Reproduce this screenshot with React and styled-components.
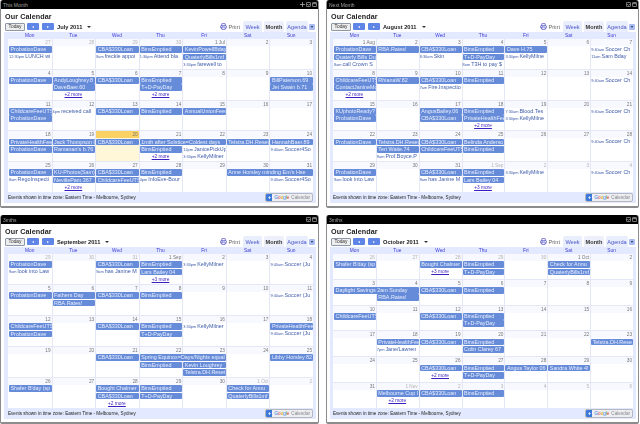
import React from "react";
import styled, { createGlobalStyle } from "styled-components";
import { Printer } from "lucide-react";

const GlobalStyle = createGlobalStyle`
  html, body {
    margin: 0;
    padding: 0;
    background: #fff;
    font-family: "Liberation Sans", Arial, sans-serif;
  }
`;

const bar = (col, row, text, span = 1) => ({ kind: "bar", col, row, text, span });
const timed = (col, row, time, text) => ({ kind: "timed", col, row, time, text, span: 1 });
const more = (col, row, n) => ({ kind: "more", col, row, text: `+${n} more`, span: 1 });

const sep1 = (soccer, kelly) => [
  bar(0, 0, "ProbationDave"),
  timed(0, 1, "9am", "look into Law"),
  bar(2, 0, "CBA$330Loan"),
  timed(2, 1, "9am", "has Janine M"),
  bar(3, 0, "BinsEmptied"),
  bar(3, 1, "Lars Bailey 04"),
  more(3, 2, 3),
  timed(4, 0, "3:30pm", kelly),
  timed(6, 0, "9:40am", soccer),
];

const calendars = [
  {
    label: "This Month",
    month: "July 2011",
    controls: 3,
    inset: 4,
    weeks: [
      {
        days: [["27", 1], ["28", 1], ["29", 1], ["30", 1], ["1 Jul"], ["2"], ["3"]],
        events: [
          bar(0, 0, "ProbationDave"),
          timed(0, 1, "12:30pm", "LUNCH wi"),
          bar(2, 0, "CBA$330Loan"),
          timed(2, 1, "8am", "freckle appoi"),
          bar(3, 0, "BinsEmptied"),
          timed(3, 1, "1:30pm", "Attend bla"),
          bar(4, 0, "KevinPowellBday"),
          bar(4, 1, "QuaterlyBills1mf"),
          timed(4, 2, "3:30pm", "farewell to"),
        ],
      },
      {
        days: [["4"], ["5"], ["6"], ["7"], ["8"], ["9"], ["10"]],
        events: [
          bar(0, 0, "ProbationDave"),
          bar(1, 0, "AndyLoughrey.8"),
          bar(1, 1, "DaveBaer.60"),
          more(1, 2, 2),
          bar(2, 0, "CBA$330Loan"),
          bar(3, 0, "BinsEmptied"),
          bar(3, 1, "T+D-PayDay"),
          more(3, 2, 2),
          bar(6, 0, "BillPaterson.69"),
          bar(6, 1, "Jet Swain b.71"),
        ],
      },
      {
        days: [["11"], ["12"], ["13"], ["14"], ["15"], ["16"], ["17"]],
        events: [
          bar(0, 0, "ChildcareFeeUTS"),
          bar(0, 1, "ProbationDave"),
          timed(1, 0, "4pm", "received call"),
          bar(2, 0, "CBA$330Loan"),
          bar(3, 0, "BinsEmptied"),
          bar(4, 0, "AnnualUnionFees"),
        ],
      },
      {
        today: 2,
        days: [["18"], ["19"], ["20"], ["21"], ["22"], ["23"], ["24"]],
        events: [
          bar(0, 0, "PrivateHealthFee"),
          bar(0, 1, "ProbationDave"),
          bar(1, 0, "Jack Thompson b"),
          bar(1, 1, "Ramanan's b.76"),
          bar(2, 0, "CBA$330Loan"),
          bar(3, 0, "1mth after Solstice=Coldest days", 2),
          bar(3, 1, "BinsEmptied"),
          more(3, 2, 2),
          timed(4, 1, "12pm", "JanicePickUp"),
          timed(4, 2, "3:30pm", "KellyMilner"),
          bar(5, 0, "Telstra.DH.Reset"),
          bar(6, 0, "HannahBaer.89"),
          timed(6, 1, "9:40am", "Soccer4So"),
        ],
      },
      {
        days: [["25"], ["26"], ["27"], ["28"], ["29"], ["30"], ["31"]],
        events: [
          bar(0, 0, "ProbationDave"),
          timed(0, 1, "8am", "RegoInspecti"),
          bar(1, 0, "KU-Photos(Sam)"),
          bar(1, 1, "NevillePam.367"),
          more(1, 2, 2),
          bar(2, 0, "CBA$330Loan"),
          bar(2, 1, "ChildcareFeeUTS"),
          bar(3, 0, "BinsEmptied"),
          timed(3, 1, "4pm", "InfoEve-Bour"),
          bar(5, 0, "Anne Horsley minding Em's Hse", 2),
          timed(6, 1, "9:40am", "Soccer4So"),
        ],
      },
    ],
  },
  {
    label: "Next Month",
    month: "August 2011",
    controls: 2,
    inset: 3,
    weeks: [
      {
        days: [["1 Aug"], ["2"], ["3"], ["4"], ["5"], ["6"], ["7"]],
        events: [
          bar(0, 0, "ProbationDave"),
          bar(0, 1, "Quaterly Bills Du"),
          timed(0, 2, "8am", "call Crown S"),
          bar(1, 0, "RBA.Rates!"),
          bar(2, 0, "CBA$330Loan"),
          timed(2, 1, "8:30am", "Skin"),
          bar(3, 0, "BinsEmptied"),
          bar(3, 1, "T+D-PayDay"),
          timed(3, 2, "8am", "T3H to pay $"),
          bar(4, 0, "Dave H.75"),
          timed(4, 1, "3:30pm", "KellyMilne"),
          timed(6, 0, "9:40am", "Soccer Ch"),
          timed(6, 1, "11am", "Sam Bday"),
        ],
      },
      {
        days: [["8"], ["9"], ["10"], ["11"], ["12"], ["13"], ["14"]],
        events: [
          bar(0, 0, "ChildcareFeeUTS"),
          bar(0, 1, "ContactJanineMc"),
          more(0, 2, 2),
          bar(1, 0, "RhianaW.82"),
          bar(2, 0, "CBA$330Loan"),
          timed(2, 1, "7am", "Fire.Inspectio"),
          bar(3, 0, "BinsEmptied"),
          timed(6, 0, "9:40am", "Soccer Ch"),
        ],
      },
      {
        days: [["15"], ["16"], ["17"], ["18"], ["19"], ["20"], ["21"]],
        events: [
          bar(0, 0, "KUphotoReady?"),
          bar(0, 1, "ProbationDave"),
          bar(2, 0, "AngusBailey.06"),
          bar(2, 1, "CBA$330Loan"),
          bar(3, 0, "BinsEmptied"),
          bar(3, 1, "PrivateHealthFee"),
          more(3, 2, 2),
          timed(4, 0, "7:30am", "Blood.Tes"),
          timed(4, 1, "3:30pm", "KellyMilne"),
          timed(6, 0, "9:40am", "Soccer Ch"),
        ],
      },
      {
        days: [["22"], ["23"], ["24"], ["25"], ["26"], ["27"], ["28"]],
        events: [
          bar(0, 0, "ProbationDave"),
          bar(1, 0, "Telstra.DH.Reset"),
          bar(1, 1, "Teri Waite.74"),
          timed(1, 2, "9am", "Prof.Boyce.P"),
          bar(2, 0, "CBA$330Loan"),
          bar(2, 1, "ChildcareFeeUTS"),
          bar(3, 0, "Belinda Anderso"),
          bar(3, 1, "BinsEmptied"),
          timed(6, 0, "9:40am", "Soccer Ch"),
        ],
      },
      {
        days: [["29"], ["30"], ["31"], ["1 Sep", 1], ["2", 1], ["3", 1], ["4", 1]],
        events: sep1("Soccer Ch", "KellyMilne"),
      },
    ],
  },
  {
    label: "3mths",
    month: "September 2011",
    controls: 2,
    inset: 4,
    weeks: [
      {
        days: [["29", 1], ["30", 1], ["31", 1], ["1 Sep"], ["2"], ["3"], ["4"]],
        events: sep1("Soccer (Ju", "KellyMilner"),
      },
      {
        days: [["5"], ["6"], ["7"], ["8"], ["9"], ["10"], ["11"]],
        events: [
          bar(0, 0, "ProbationDave"),
          bar(1, 0, "Fathers Day"),
          bar(1, 1, "RBA.Rates!"),
          bar(2, 0, "CBA$330Loan"),
          bar(3, 0, "BinsEmptied"),
          timed(6, 0, "9:40am", "Soccer (Ju"),
        ],
      },
      {
        days: [["12"], ["13"], ["14"], ["15"], ["16"], ["17"], ["18"]],
        events: [
          bar(0, 0, "ChildcareFeeUTS"),
          bar(0, 1, "ProbationDave"),
          bar(2, 0, "CBA$330Loan"),
          bar(3, 0, "BinsEmptied"),
          bar(3, 1, "T+D-PayDay"),
          timed(4, 0, "3:30pm", "KellyMilner"),
          bar(6, 0, "PrivateHealthFee"),
          timed(6, 1, "9:40am", "Soccer (Ju"),
        ],
      },
      {
        days: [["19"], ["20"], ["21"], ["22"], ["23"], ["24"], ["25"]],
        events: [
          bar(2, 0, "CBA$330Loan"),
          bar(3, 0, "Spring Equinox=Days/Nights equal", 2),
          bar(3, 1, "BinsEmptied"),
          bar(4, 1, "Kevin Loughrey"),
          bar(4, 2, "Telstra.DH.Reset"),
          bar(6, 0, "Libby Horsley 82"),
        ],
      },
      {
        days: [["26"], ["27"], ["28"], ["29"], ["30"], ["1 Oct", 1], ["2", 1]],
        events: [
          bar(0, 0, "Shafer B'day (sp"),
          bar(2, 0, "Bought Chalmer"),
          bar(2, 1, "CBA$330Loan"),
          more(2, 2, 2),
          bar(3, 0, "BinsEmptied"),
          bar(3, 1, "T+D-PayDay"),
          bar(5, 0, "Check for Annu"),
          bar(5, 1, "QuaterlyBills1mf"),
        ],
      },
    ],
  },
  {
    label: "3mths",
    month: "October 2011",
    controls: 2,
    inset: 3,
    weeks: [
      {
        days: [["26", 1], ["27", 1], ["28", 1], ["29", 1], ["30", 1], ["1 Oct"], ["2"]],
        events: [
          bar(0, 0, "Shafer B'day (sp"),
          bar(2, 0, "Bought Chalmer"),
          more(2, 1, 3),
          bar(3, 0, "BinsEmptied"),
          bar(3, 1, "T+D-PayDay"),
          bar(5, 0, "Check for Annu"),
          bar(5, 1, "QuaterlyBills1mf"),
        ],
      },
      {
        days: [["3"], ["4"], ["5"], ["6"], ["7"], ["8"], ["9"]],
        events: [
          bar(0, 0, "Daylight Savings 2am Sunday", 2),
          bar(1, 1, "RBA.Rates!"),
          bar(2, 0, "CBA$330Loan"),
          bar(3, 0, "BinsEmptied"),
        ],
      },
      {
        days: [["10"], ["11"], ["12"], ["13"], ["14"], ["15"], ["16"]],
        events: [
          bar(0, 0, "ChildcareFeeUTS"),
          bar(2, 0, "CBA$330Loan"),
          bar(3, 0, "BinsEmptied"),
          bar(3, 1, "T+D-PayDay"),
        ],
      },
      {
        days: [["17"], ["18"], ["19"], ["20"], ["21"], ["22"], ["23"]],
        events: [
          bar(1, 0, "PrivateHealthFee"),
          timed(1, 1, "7pm", "Jane/Lawren"),
          bar(2, 0, "CBA$330Loan"),
          bar(3, 0, "BinsEmptied"),
          bar(3, 1, "Colin Clarey 67"),
          bar(6, 0, "Telstra.DH.Rese"),
        ],
      },
      {
        days: [["24"], ["25"], ["26"], ["27"], ["28"], ["29"], ["30"]],
        events: [
          bar(2, 0, "CBA$330Loan"),
          more(2, 1, 2),
          bar(3, 0, "BinsEmptied"),
          bar(3, 1, "T+D-PayDay"),
          bar(4, 0, "Angus Taylor 06"),
          bar(5, 0, "Sandra White 4!"),
        ],
      },
      {
        days: [["31"], ["1 Nov", 1], ["2", 1], ["3", 1], ["4", 1], ["5", 1], ["6", 1]],
        events: [
          bar(1, 0, "Melbourne Cup I"),
          more(1, 1, 2),
          bar(2, 0, "CBA$330Loan"),
          bar(3, 0, "BinsEmptied"),
        ],
      },
    ],
  },
];

const dayNames = ["Mon", "Tue", "Wed", "Thu", "Fri", "Sat", "Sun"];

const Page = styled.div`
  width: 640px;
  height: 424px;
  overflow: hidden;
  display: grid;
  grid-template-columns: 319px 313px;
  grid-template-rows: 208px 209px;
  column-gap: 7px;
  row-gap: 7px;
  filter: blur(0.3px);
`;

const Gadget = styled.section`
  display: flex;
  flex-direction: column;
  min-width: 0;
  min-height: 0;
  border: solid #8c8c8c;
  border-width: 0 1px 2px 1px;
  border-radius: 3px 3px 2px 2px;
  background: #fff;
`;

const TitleBar = styled.header`
  flex: none;
  height: 9px;
  background: #000;
  border-radius: 2px 2px 0 0;
  display: flex;
  align-items: center;
  justify-content: space-between;
  padding: 0 1px 0 2px;
  color: #a0a0a0;
  font-size: 5px;
`;

const GadgetIcons = styled.div`
  display: flex;
  gap: 1px;
  color: #a8a8a8;
`;

const Body = styled.div`
  flex: 1;
  min-height: 0;
  display: flex;
  flex-direction: column;
  padding: 3px 2px 3px 3px;
`;

const CalendarTitle = styled.h2`
  margin: 0;
  font-size: 7.2px;
  line-height: 9px;
  font-weight: bold;
  letter-spacing: 0.1px;
  color: #222;
  padding-left: 1px;
`;

const Toolbar = styled.div`
  display: flex;
  align-items: center;
  height: 11px;
  padding-left: 1px;
`;

const TodayButton = styled.button`
  width: 20px;
  height: 8px;
  padding: 0;
  font: 4.8px "Liberation Sans", Arial, sans-serif;
  color: #333;
  background: #eee;
  border: 1px solid #8d98a8;
  border-radius: 1px;
`;

const NavButton = styled.button`
  width: 12px;
  height: 7px;
  margin-left: ${(p) => (p.$gap ? 3 : 2)}px;
  padding: 0;
  border: none;
  border-radius: 1px;
  background: #5f86e6;
  display: flex;
  align-items: center;
  justify-content: center;
`;

const Arrow = styled.span`
  width: 0;
  height: 0;
  border-style: solid;
  border-width: 1.5px 0 1.5px 2px;
  border-color: transparent transparent transparent #fff;
  transform: ${(p) => (p.$left ? "rotate(180deg)" : "none")};
`;

const MonthName = styled.span`
  margin-left: 3px;
  font-size: 5.7px;
  font-weight: bold;
  white-space: nowrap;
  color: #222;
`;

const DownCaret = styled.span`
  width: 0;
  height: 0;
  margin-left: 5px;
  border-style: solid;
  border-width: 2px 2px 0 2px;
  border-color: #333 transparent transparent transparent;
`;

const ViewSwitch = styled.div`
  margin-left: auto;
  display: flex;
  align-items: center;
  height: 11px;
  gap: 2px;
`;

const PrintLink = styled.span`
  display: flex;
  align-items: center;
  gap: 1px;
  margin-right: 1px;
  font-size: 5.6px;
  color: #666;
  svg {
    color: #5555c8;
  }
`;

const ViewTab = styled.span`
  height: 11px;
  line-height: 12px;
  width: ${(p) => p.$width}px;
  text-align: center;
  background: ${(p) => (p.$active ? "#edf0fb" : "#e9eefd")};
  color: ${(p) => (p.$active ? "#333" : "#4a55c8")};
  font-size: 5.6px;
  font-weight: ${(p) => (p.$active ? "bold" : "normal")};
  border-radius: 2px 2px 0 0;
`;

const ViewMenu = styled.span`
  width: 6px;
  height: 6px;
  background: #a9bdf1;
  border-radius: 1px;
  margin: 0 1px 0 -1px;
  display: flex;
  align-items: center;
  justify-content: center;
  &::after {
    content: "";
    border-style: solid;
    border-width: 2px 1.5px 0 1.5px;
    border-color: #224 transparent transparent transparent;
  }
`;

const Frame = styled.div`
  flex: 1;
  min-height: 0;
  display: flex;
  flex-direction: column;
  background: #e3e9ff;
  padding: 0 3px 0 ${(p) => p.$inset}px;
`;

const DayHeader = styled.div`
  flex: none;
  height: 7px;
  display: grid;
  grid-template-columns: repeat(7, 1fr);
`;

const DayName = styled.span`
  text-align: center;
  font-size: 4.8px;
  line-height: 7px;
  color: #3a3ad0;
`;

const Weeks = styled.div`
  flex: 1;
  min-height: 0;
  display: flex;
  flex-direction: column;
  background: #fff;
`;

const Week = styled.div`
  flex: 1;
  min-height: 0;
  overflow: hidden;
  display: grid;
  grid-template-columns: repeat(7, 1fr);
  grid-template-rows: 7px repeat(3, 7.3px) 1fr;
  border-top: 1px solid #e4e7f6;
  &:first-child {
    border-top: none;
  }
`;

const CellBack = styled.div`
  grid-column: ${(p) => p.$col + 1};
  grid-row: 2 / -1;
  background: ${(p) => (p.$today ? "#fff7d7" : "transparent")};
  border-left: ${(p) => (p.$col ? "1px solid #e4e7f6" : "none")};
`;

const DateCell = styled.div`
  grid-column: ${(p) => p.$col + 1};
  grid-row: 1;
  background: ${(p) => (p.$today ? "#fad163" : "#f8f9ff")};
  color: ${(p) => (p.$other ? "#b4b4b4" : "#777")};
  border-left: ${(p) => (p.$col ? "1px solid #e4e7f6" : "none")};
  font-size: 4.7px;
  line-height: 7px;
  text-align: right;
  padding-right: 1px;
  white-space: nowrap;
  overflow: hidden;
`;

const Placed = styled.div`
  grid-column: ${(p) => p.$col + 1} / span ${(p) => p.$span};
  grid-row: ${(p) => p.$row + 2};
  min-width: 0;
  white-space: nowrap;
  overflow: hidden;
  font-size: 5.4px;
  line-height: 7.3px;
`;

const EventBar = styled(Placed)`
  background: #668cd9;
  color: #e6ecfb;
  margin: 0.3px 0 0.3px 1px;
  line-height: 6.7px;
  padding-left: 1.5px;
  border-radius: 1px;
`;

const TimedEvent = styled(Placed)`
  color: #3f5cab;
  padding-left: 1px;
  b {
    font-size: 3.9px;
    font-weight: normal;
    margin-right: 1px;
  }
`;

const MoreLink = styled(Placed)`
  text-align: center;
  color: #3a1fc0;
  text-decoration: underline;
  font-size: 4.8px;
`;

const Footer = styled.footer`
  flex: none;
  height: 11px;
  display: flex;
  align-items: center;
  justify-content: space-between;
  font-size: 4.6px;
  color: #222;
`;

const Badge = styled.span`
  display: flex;
  align-items: center;
  height: 7px;
  padding-right: 2px;
  border: 1px solid #b5b8c0;
  border-radius: 2px;
  background: #eceef2;
  font-size: 4.6px;
  gap: 2px;
`;

const BadgeMark = styled.span`
  width: 6px;
  height: 7px;
  background: #3c78d8;
  color: #fff;
  font-size: 6px;
  line-height: 7px;
  font-weight: bold;
  text-align: center;
  border-radius: 1px 0 0 1px;
`;

const GoogleLetter = styled.span`
  color: ${(p) => p.$color};
`;

const BadgeWord = styled.span`
  color: #888;
`;

const WindowIcon = ({ kind }) => (
  <svg width="5" height="5" viewBox="0 0 6 6" fill="none" stroke="currentColor">
    {kind === "move" ? (
      <path d="M3 0v6M0 3h6" />
    ) : (
      <rect x="0.5" y="0.5" width="5" height="5" rx="1" />
    )}
    {kind === "min" && <path d="M1.5 2.5L3 4l1.5-1.5" />}
    {kind === "max" && <path d="M1 2h4" />}
  </svg>
);

const GoogleWord = () => (
  <span>
    <GoogleLetter $color="#3c78d8">G</GoogleLetter>
    <GoogleLetter $color="#d9453c">o</GoogleLetter>
    <GoogleLetter $color="#e0a800">o</GoogleLetter>
    <GoogleLetter $color="#3c78d8">g</GoogleLetter>
    <GoogleLetter $color="#3a9a4b">l</GoogleLetter>
    <GoogleLetter $color="#d9453c">e</GoogleLetter>
  </span>
);

const EventItem = ({ ev }) => {
  const place = { $col: ev.col, $row: ev.row, $span: ev.span };
  if (ev.kind === "bar") return <EventBar {...place}>{ev.text}</EventBar>;
  if (ev.kind === "more") return <MoreLink {...place}>{ev.text}</MoreLink>;
  return (
    <TimedEvent {...place}>
      <b>{ev.time}</b>
      {ev.text}
    </TimedEvent>
  );
};

const Calendar = ({ cal }) => (
  <Gadget>
    <TitleBar>
      <span>{cal.label}</span>
      <GadgetIcons>
        {cal.controls === 3 && <WindowIcon kind="move" />}
        <WindowIcon kind="min" />
        <WindowIcon kind="max" />
      </GadgetIcons>
    </TitleBar>
    <Body>
      <CalendarTitle>Our Calendar</CalendarTitle>
      <Toolbar>
        <TodayButton>Today</TodayButton>
        <NavButton>
          <Arrow $left />
        </NavButton>
        <NavButton $gap>
          <Arrow />
        </NavButton>
        <MonthName>{cal.month}</MonthName>
        <DownCaret />
        <ViewSwitch>
          <PrintLink>
            <Printer size={7} strokeWidth={2.5} />
            Print
          </PrintLink>
          <ViewTab $width={19}>Week</ViewTab>
          <ViewTab $width={20} $active>
            Month
          </ViewTab>
          <ViewTab $width={22}>Agenda</ViewTab>
          <ViewMenu />
        </ViewSwitch>
      </Toolbar>
      <Frame $inset={cal.inset}>
        <DayHeader>
          {dayNames.map((d) => (
            <DayName key={d}>{d}</DayName>
          ))}
        </DayHeader>
        <Weeks>
          {cal.weeks.map((week, w) => (
            <Week key={w}>
              {week.days.map(([label, other], i) => (
                <React.Fragment key={i}>
                  <DateCell $col={i} $other={other} $today={week.today === i}>
                    {label}
                  </DateCell>
                  <CellBack $col={i} $today={week.today === i} />
                </React.Fragment>
              ))}
              {week.events.map((ev, i) => (
                <EventItem key={i} ev={ev} />
              ))}
            </Week>
          ))}
        </Weeks>
        <Footer>
          <span>Events shown in time zone: Eastern Time - Melbourne, Sydney</span>
          <Badge>
            <BadgeMark>+</BadgeMark>
            <GoogleWord />
            <BadgeWord>Calendar</BadgeWord>
          </Badge>
        </Footer>
      </Frame>
    </Body>
  </Gadget>
);

export default function App() {
  return (
    <>
      <GlobalStyle />
      <Page>
        {calendars.map((cal) => (
          <Calendar key={cal.month} cal={cal} />
        ))}
      </Page>
    </>
  );
}
